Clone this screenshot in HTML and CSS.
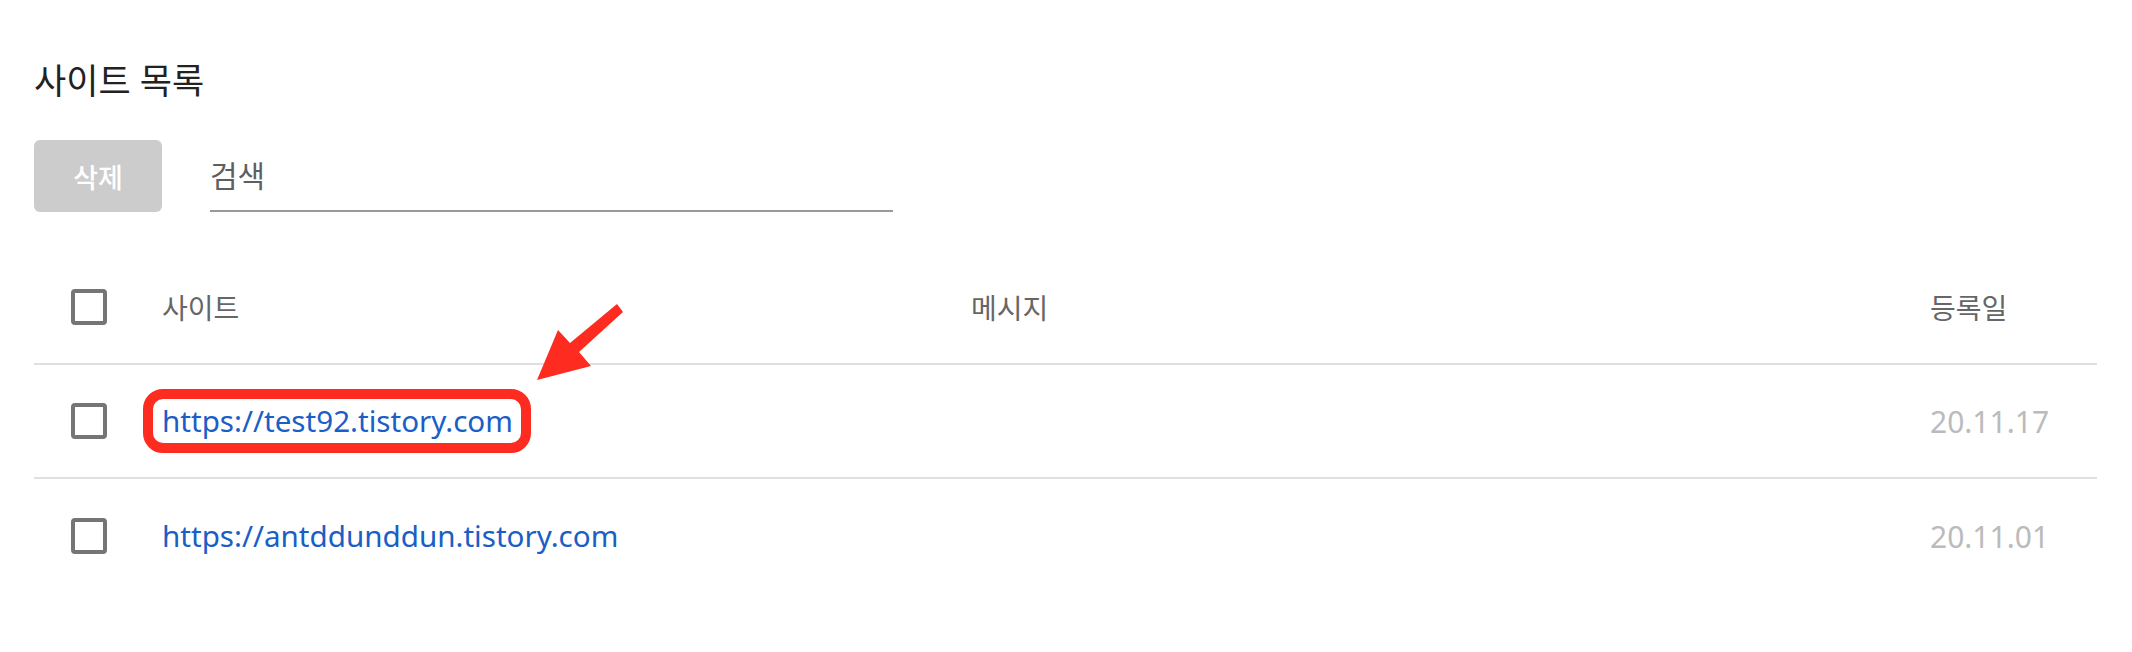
FILE: index.html
```html
<!DOCTYPE html>
<html lang="ko">
<head>
<meta charset="utf-8">
<title>사이트 목록</title>
<link rel="stylesheet" href="styles.css">
</head>
<body>
<main class="page">
  <h1 class="title">사이트 목록</h1>
  <div class="toolbar">
    <button class="btn-delete" type="button">삭제</button>
    <input class="search" type="text" placeholder="검색">
  </div>
  <div class="table">
    <div class="row head">
      <div class="cell check"><span class="checkbox"></span></div>
      <div class="cell site">사이트</div>
      <div class="cell msg">메시지</div>
      <div class="cell date">등록일</div>
    </div>
    <div class="row">
      <div class="cell check"><span class="checkbox"></span></div>
      <div class="cell site"><a class="link highlight" href="#">https://test92.tistory.com</a></div>
      <div class="cell msg"></div>
      <div class="cell date">20.11.17</div>
    </div>
    <div class="row">
      <div class="cell check"><span class="checkbox"></span></div>
      <div class="cell site"><a class="link" href="#">https://antddunddun.tistory.com</a></div>
      <div class="cell msg"></div>
      <div class="cell date">20.11.01</div>
    </div>
  </div>
  <svg class="arrow" width="100" height="85" viewBox="0 0 100 85" aria-hidden="true">
    <polygon points="87,4 93,12 49,52 61,66 7,80 28,30 40,43" fill="#fd2b20"/>
  </svg>
</main>
</body>
</html>
```
FILE: styles.css
```css
html, body {
  margin: 0;
  padding: 0;
  background: #fff;
}
body {
  font-family: "Noto Sans", "Noto Sans CJK KR", sans-serif;
  color: #222;
}
.page {
  position: relative;
  padding: 57px 35px 0 34px;
}
.title {
  margin: 0;
  font-size: 35px;
  font-weight: 400;
  line-height: 48px;
  color: #222;
}
.toolbar {
  display: flex;
  align-items: stretch;
  gap: 48px;
  margin-top: 35px;
  height: 72px;
}
.btn-delete {
  width: 128px;
  height: 72px;
  border: none;
  border-radius: 6px;
  background: #cccccc;
  color: #fff;
  font-family: "Noto Sans", "Noto Sans CJK KR", sans-serif;
  font-size: 27px;
  font-weight: 500;
  padding: 0;
}
.search {
  width: 683px;
  box-sizing: border-box;
  border: none;
  border-bottom: 2px solid #999;
  padding: 0;
  margin: 0;
  outline: none;
  background: transparent;
  font-family: "Noto Sans", "Noto Sans CJK KR", sans-serif;
  font-size: 30px;
  color: #333;
}
.search::placeholder {
  color: #5f5f5f;
}
.table {
  margin-top: 39px;
}
.row {
  display: grid;
  grid-template-columns: 128px 809px 959px 1fr;
  align-items: center;
  height: 114px;
  box-sizing: border-box;
  border-bottom: 2px solid #e0e0e0;
}
.row:last-child {
  border-bottom: none;
}
.cell {
  font-size: 28px;
}
.check {
  padding-left: 37px;
  display: flex;
  align-items: center;
}
.checkbox {
  display: block;
  width: 36px;
  height: 36px;
  box-sizing: border-box;
  border: 4px solid #757575;
  border-radius: 4px;
}
.head .cell {
  color: #666;
  font-size: 28px;
}
.link {
  display: inline-block;
  line-height: 40px;
  font-size: 29.6px;
  color: #1a5ec6;
  text-decoration: none;
}
.highlight {
  position: relative;
}
.highlight::after {
  content: "";
  position: absolute;
  left: -19px;
  right: -18px;
  top: -12px;
  bottom: -12px;
  border: 10px solid #fd2b20;
  border-radius: 20px;
}
.date {
  font-size: 30px;
  color: #bbbbbb;
}
.head .date {
  font-size: 28px;
}
.arrow {
  position: absolute;
  left: 530px;
  top: 300px;
}
```
